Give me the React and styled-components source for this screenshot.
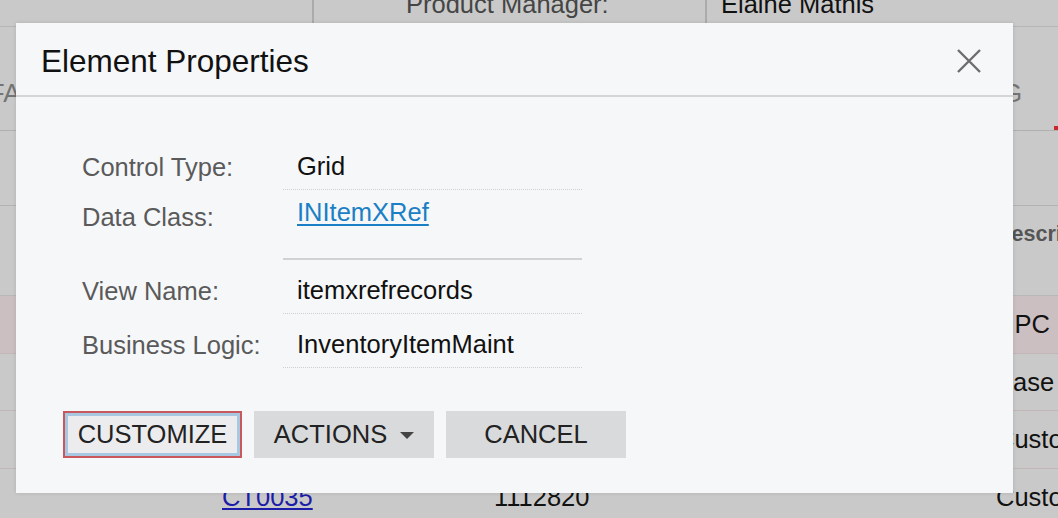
import styled, { createGlobalStyle, css } from 'styled-components';

const GlobalStyle = createGlobalStyle`
  html, body {
    margin: 0;
    padding: 0;
    background: #c9c9c9;
    font-family: "Liberation Sans", Arial, sans-serif;
  }
  * {
    box-sizing: border-box;
  }
`;

const rows = [
  { type: 'Barcode', id: '0011128201', description: 'UPC', selected: true },
  { type: 'Global', id: '1112820-B', description: 'Base unit' },
  { type: 'Customer', id: 'CT0012', description: 'Customer part' },
  { type: 'Customer', id: 'CT0035', description: 'Customer part', number: '1112820' },
];

const properties = [
  { label: 'Control Type:', value: 'Grid' },
  { label: 'Data Class:', value: 'INItemXRef', link: true },
];

const moreProperties = [
  { label: 'View Name:', value: 'itemxrefrecords' },
  { label: 'Business Logic:', value: 'InventoryItemMaint' },
];

function CloseIcon() {
  return (
    <svg width="24" height="24" viewBox="0 0 24 24" aria-hidden="true">
      <path d="M1 1 L23 23 M23 1 L1 23" stroke="#6d6d6d" strokeWidth="2.4" fill="none" />
    </svg>
  );
}

function App() {
  return (
    <Page>
      <GlobalStyle />
      <TopBar>
        <TopCell />
        <TopCell $pad="92px">Product Manager:</TopCell>
        <TopCell $pad="14px" $dark>
          Elaine Mathis
        </TopCell>
      </TopBar>
      <TabBar>
        <TabGroup>
          <Tab $first>FA</Tab>
          <Tab>PACKAGING</Tab>
        </TabGroup>
        <div />
        <ActiveTab>CROSS-REFERENCE</ActiveTab>
      </TabBar>
      <Toolbar />
      <GridHeader>
        <Cell />
        <Cell $head>Alternate ID</Cell>
        <Cell $head>Alternate Type</Cell>
        <Cell $head>Description</Cell>
      </GridHeader>
      {rows.map((row) => (
        <GridRow key={row.id} $selected={row.selected}>
          <Cell />
          <Cell>
            <GridLink>{row.id}</GridLink>
          </Cell>
          <Cell>{row.number || row.type}</Cell>
          <Cell>{row.description}</Cell>
        </GridRow>
      ))}

      <Dialog>
        <DialogHeader>
          <DialogTitle>Element Properties</DialogTitle>
          <CloseButton aria-label="Close">
            <CloseIcon />
          </CloseButton>
        </DialogHeader>
        <DialogBody>
          <Form>
            {properties.map((p) => (
              <FormRow key={p.label} $link={p.link}>
                <Label>{p.label}</Label>
                <Value $link={p.link}>
                  {p.link ? <ValueLink>{p.value}</ValueLink> : p.value}
                </Value>
              </FormRow>
            ))}
            <Separator />
            {moreProperties.map((p) => (
              <FormRow key={p.label}>
                <Label>{p.label}</Label>
                <Value>{p.value}</Value>
              </FormRow>
            ))}
          </Form>
          <Buttons>
            <Button $focused>CUSTOMIZE</Button>
            <Button>
              ACTIONS
              <Caret />
            </Button>
            <Button>CANCEL</Button>
          </Buttons>
        </DialogBody>
      </Dialog>
    </Page>
  );
}

const Page = styled.div`
  position: relative;
  width: 1058px;
  height: 518px;
  overflow: hidden;
  display: flex;
  flex-direction: column;
  background: #c9c9c9;
  font-size: 25.5px;
`;

const TopBar = styled.div`
  flex: none;
  height: 27px;
  display: grid;
  grid-template-columns: 314px 393px 1fr;
  grid-template-rows: 26px;
  border-bottom: 1px solid #b6b6b6;
  overflow: hidden;
`;

const TopCell = styled.div`
  display: flex;
  align-items: flex-end;
  min-height: 0;
  padding: 0 0 7px ${(p) => p.$pad || '0'};
  line-height: 30px;
  color: ${(p) => (p.$dark ? '#111' : '#454545')};
  border-right: ${(p) => (p.$dark ? 'none' : '2px solid #ababab')};
  white-space: nowrap;
`;

const TabBar = styled.div`
  flex: none;
  height: 104px;
  display: grid;
  grid-template-columns: 1022px 32px 120px;
  border-bottom: 1px solid #b0b0b0;
`;

const TabGroup = styled.div`
  display: flex;
  justify-content: space-between;
  align-items: flex-end;
  padding-bottom: 22px;
`;

const Tab = styled.div`
  line-height: 30px;
  color: #747474;
  white-space: nowrap;
  ${(p) =>
    p.$first &&
    css`
      margin-left: -11px;
    `}
`;

const ActiveTab = styled(Tab)`
  height: 100%;
  display: flex;
  align-items: flex-end;
  padding: 0 0 22px 20px;
  border-bottom: 4px solid #c8282d;
  margin-bottom: -1px;
`;

const Toolbar = styled.div`
  flex: none;
  height: 75px;
  border-bottom: 1px solid #b3b3b3;
`;

const gridColumns = css`
  display: grid;
  grid-template-columns: 208px 272px 502px 1fr;
`;

const GridHeader = styled.div`
  ${gridColumns};
  flex: none;
  height: 90px;
  align-items: start;
  padding-top: 13px;
  border-bottom: 1px solid #b8b8b8;
`;

const GridRow = styled.div`
  ${gridColumns};
  flex: none;
  height: 57.5px;
  align-items: center;
  background: ${(p) => (p.$selected ? '#ccbfc1' : '#c9c9c9')};
  border-bottom: 1px solid #c2b6b8;
`;

const Cell = styled.div`
  padding-left: 14px;
  line-height: 30px;
  white-space: nowrap;
  overflow: hidden;
  color: ${(p) => (p.$head ? '#555' : '#111')};
  font-weight: ${(p) => (p.$head ? 700 : 400)};
  font-size: ${(p) => (p.$head ? '21.5px' : 'inherit')};
`;

const GridLink = styled.span`
  color: #1c1ca8;
  text-decoration: underline;
`;

const Dialog = styled.div`
  position: absolute;
  left: 16px;
  top: 23px;
  width: 997px;
  height: 470px;
  display: flex;
  flex-direction: column;
  background: #f6f7f9;
  box-shadow: 0 0 4px rgba(0, 0, 0, 0.12);
`;

const DialogHeader = styled.div`
  flex: none;
  height: 74px;
  display: flex;
  align-items: center;
  justify-content: space-between;
  padding: 4px 32px 0 25px;
  border-bottom: 2px solid #d4d5d7;
`;

const DialogTitle = styled.h1`
  margin: 0;
  font-size: 31.5px;
  font-weight: 400;
  color: #111;
  line-height: 36px;
`;

const CloseButton = styled.button`
  width: 24px;
  height: 24px;
  padding: 0;
  border: none;
  background: none;
  display: flex;
  cursor: pointer;
`;

const DialogBody = styled.div`
  padding: 46px 0 0 66px;
`;

const Form = styled.div`
  display: flex;
  flex-direction: column;
  gap: 7px;
`;

const FormRow = styled.div`
  display: grid;
  grid-template-columns: 201px 299px;
  height: ${(p) => (p.$link ? '40px' : '47px')};
  align-items: center;
`;

const Label = styled.div`
  color: #5a5a5a;
  line-height: 30px;
`;

const Value = styled.div`
  height: 100%;
  display: flex;
  align-items: ${(p) => (p.$link ? 'flex-start' : 'center')};
  padding-left: 14px;
  color: #111;
  line-height: 30px;
  border-bottom: ${(p) => (p.$link ? 'none' : '1px dotted #cfd0d2')};
`;

const ValueLink = styled.a`
  color: #1a7fc4;
  text-decoration: underline;
  text-underline-offset: 3px;
  cursor: pointer;
`;

const Separator = styled.div`
  margin: 14px 0 0 201px;
  width: 299px;
  height: 2px;
  background: #d1d2d4;
`;

const Buttons = styled.div`
  display: flex;
  gap: 12px;
  margin: 43px 0 0 -19px;
`;

const Button = styled.button`
  width: 180px;
  height: 47px;
  display: flex;
  align-items: center;
  justify-content: center;
  gap: 13px;
  padding: 0;
  font-family: inherit;
  font-size: 25.5px;
  color: #222;
  background: #d9dadc;
  border: none;
  cursor: pointer;
  ${(p) =>
    p.$focused &&
    css`
      width: 179px;
      background: #ececee;
      border: 2px solid #c9585c;
      box-shadow: inset 0 0 0 3px #a8c7e0;
    `}
`;

const Caret = styled.span`
  width: 0;
  height: 0;
  border-left: 7px solid transparent;
  border-right: 7px solid transparent;
  border-top: 7px solid #444;
  margin-top: 2px;
`;

export default App;
